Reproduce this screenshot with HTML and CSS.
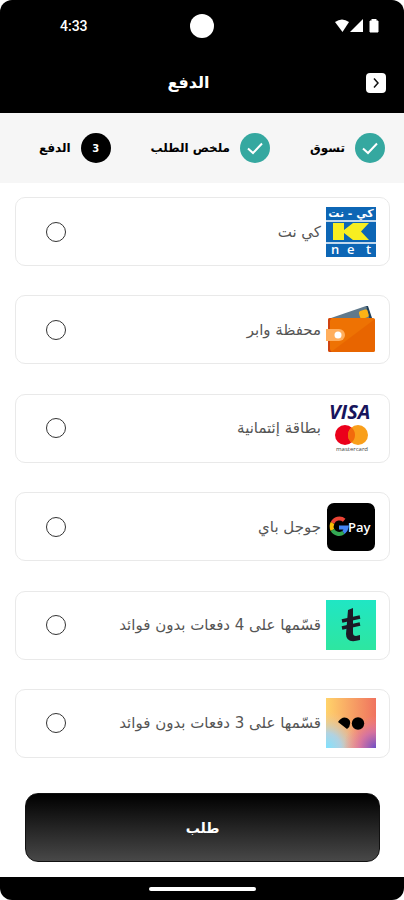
FILE: index.html
```html
<!DOCTYPE html>
<html lang="ar" dir="rtl">
<head>
    <meta charset="UTF-8">
    <meta name="viewport" content="width=device-width, initial-scale=1.0">
    <title>الدفع</title>
    <link rel="stylesheet" href="styles.css">
</head>
<body>
    <div class="screen">
        <div class="status-bar" dir="ltr">
            <span class="time">4:33</span>
            <span class="camera"></span>
            <svg class="status-icons" width="44" height="14" viewBox="0 0 44 14" fill="#fff">
                <path d="M0 3Q7 -2 14 3L7.500 13Z"/>
                <path d="M28 0V13H15Z"/>
                <path d="M35 2H37V0H41V2H43V13H35Z" stroke="#fff" stroke-linejoin="round"/>
            </svg>
        </div>

        <header class="header">
            <button type="button" class="back" aria-label="رجوع">
                <svg width="20" height="20" viewBox="0 0 20 20" fill="none" stroke="#111" stroke-width="1.500">
                    <path d="M8 5.500L12 10L8 14.500"/>
                </svg>
            </button>
            <h1>الدفع</h1>
        </header>

        <ol class="steps">
            <li class="step">
                <span class="badge done">
                    <svg width="30" height="30" viewBox="0 0 30 30" fill="none" stroke="#fff" stroke-width="2">
                        <path d="M8 15.500L13 20L22 10.500"/>
                    </svg>
                </span>
                <span>تسوق</span>
            </li>
            <li class="step">
                <span class="badge done">
                    <svg width="30" height="30" viewBox="0 0 30 30" fill="none" stroke="#fff" stroke-width="2">
                        <path d="M8 15.500L13 20L22 10.500"/>
                    </svg>
                </span>
                <span>ملخص الطلب</span>
            </li>
            <li class="step">
                <span class="badge">3</span>
                <span>الدفع</span>
            </li>
        </ol>

        <form class="payment">
            <div class="methods">
                <label class="method" for="knet">
                    <svg class="logo" viewBox="0 0 50 50">
                        <rect width="50" height="50" fill="#0d66b5"/>
                        <path d="M0 14H50M0 36H50" stroke="#fff" stroke-width="1.500"/>
                        <text class="knet-name" x="25" y="10" font-size="11" fill="#fff">كي - نت</text>
                        <path d="M7 16H18V23L27 16H43L35 24.500L43 33H27L18 26V33H7Z" fill="#f8ee20"/>
                        <g class="logo-text" fill="#fff" font-size="13" font-weight="600">
                            <text x="5" y="47">n</text>
                            <text x="21" y="47">e</text>
                            <text x="40" y="47">t</text>
                        </g>
                    </svg>
                    <span class="name">كي نت</span>
                    <input type="radio" name="method" id="knet">
                </label>

                <label class="method" for="wallet">
                    <svg class="logo" viewBox="0 0 50 50">
                        <path d="M5 13L40 1L46 16H8Z" fill="#60798b"/>
                        <path d="M40 1L42 1L47 16H44Z" fill="#203f58"/>
                        <rect x="33" y="5" width="9" height="8" rx="2" fill="#fbb316" transform="rotate(-17 38 8)"/>
                        <rect x="2" y="13" width="47" height="34" rx="2" fill="#ee7203"/>
                        <path d="M5 47L49 14V45Q49 47 47 47Z" fill="#e86500"/>
                        <path d="M4 13Q2 13 2 15V45Q2 47 4 47H6Q4 46 4 44V16Q4 14 6 13Z" fill="#cf4310"/>
                        <path d="M0 24H13A6 6 0 0 1 13 36H0Z" fill="#ffae5c"/>
                        <circle cx="12" cy="30" r="3.500" fill="#fff"/>
                    </svg>
                    <span class="name">محفظة وابر</span>
                    <input type="radio" name="method" id="wallet">
                </label>

                <label class="method" for="card">
                    <svg class="logo" viewBox="0 0 50 50">
                        <text class="logo-text" x="3" y="16" font-size="20" font-style="italic" font-weight="bold" fill="#17145c">VISA</text>
                        <circle cx="19" cy="32" r="10" fill="#eb001b"/>
                        <circle cx="32" cy="32" r="10" fill="#f99f1b"/>
                        <path d="M25.500 24.400A10 10 0 0 1 25.500 39.600A10 10 0 0 1 25.500 24.400Z" fill="#f26a0c"/>
                        <text class="logo-text" x="10" y="48" font-size="6" fill="#444">mastercard</text>
                    </svg>
                    <span class="name">بطاقة إئتمانية</span>
                    <input type="radio" name="method" id="card">
                </label>

                <label class="method" for="gpay">
                    <svg class="logo" viewBox="0 0 50 50">
                        <rect x="1" y="1" width="48" height="48" rx="7" fill="#000"/>
                        <g fill="none" stroke-width="4">
                            <path d="M18.200 18.200A7.500 7.500 0 0 0 6.500 21" stroke="#ea4335"/>
                            <path d="M6.500 21A7.500 7.500 0 0 0 6.500 28" stroke="#fbbc05"/>
                            <path d="M6.500 28A7.500 7.500 0 0 0 17.500 30.500" stroke="#34a853"/>
                            <path d="M17.500 30.500A7.500 7.500 0 0 0 20.500 25.500H13" stroke="#4285f4"/>
                        </g>
                        <text class="logo-text" x="22" y="30" font-size="13" font-weight="600" fill="#fff">Pay</text>
                    </svg>
                    <span class="name">جوجل باي</span>
                    <input type="radio" name="method" id="gpay">
                </label>

                <label class="method" for="split4">
                    <svg class="logo" viewBox="0 0 50 50">
                        <defs>
                            <linearGradient id="mint" x1="0" y1="0" x2="0" y2="1">
                                <stop offset="0" stop-color="#20e6c4"/>
                                <stop offset="1" stop-color="#2ee6a0"/>
                            </linearGradient>
                        </defs>
                        <rect width="50" height="50" fill="url(#mint)"/>
                        <path d="M22 10L27 8V33Q27 36 30 36L34 35V40Q20 44 20 34Z" fill="#1d1a26"/>
                        <path d="M16 21L34 17M16 28L34 24" stroke="#1d1a26" stroke-width="3.500"/>
                    </svg>
                    <span class="name">قسّمها على 4 دفعات بدون فوائد</span>
                    <input type="radio" name="method" id="split4">
                </label>

                <label class="method" for="split3">
                    <svg class="logo" viewBox="0 0 50 50">
                        <defs>
                            <linearGradient id="warm" x1="0" y1="0" x2="1" y2="0">
                                <stop offset="0" stop-color="#ffd36a"/>
                                <stop offset="1" stop-color="#f0735f"/>
                            </linearGradient>
                            <radialGradient id="sky" cx="0" cy="1" r="0.750">
                                <stop offset="0" stop-color="#7ee2ff"/>
                                <stop offset="0.400" stop-color="#a9d3ee" stop-opacity="0.900"/>
                                <stop offset="1" stop-color="#ffc28a" stop-opacity="0"/>
                            </radialGradient>
                            <radialGradient id="violet" cx="1" cy="1" r="0.650">
                                <stop offset="0" stop-color="#6a4fc8"/>
                                <stop offset="0.500" stop-color="#cf6fae" stop-opacity="0.800"/>
                                <stop offset="1" stop-color="#f2809a" stop-opacity="0"/>
                            </radialGradient>
                        </defs>
                        <rect width="50" height="50" fill="url(#warm)"/>
                        <rect width="50" height="50" fill="url(#sky)"/>
                        <rect width="50" height="50" fill="url(#violet)"/>
                        <circle cx="32" cy="25.500" r="6.200" fill="#000"/>
                        <path d="M12 24Q16 18 21 20Q25 22 24 26Q24 29 21 31Z" fill="#000"/>
                    </svg>
                    <span class="name">قسّمها على 3 دفعات بدون فوائد</span>
                    <input type="radio" name="method" id="split3">
                </label>
            </div>

            <button type="submit" class="submit">طلب</button>
        </form>

        <div class="nav-bar"><span class="handle"></span></div>
    </div>
</body>
</html>
```
FILE: styles.css
```css
* {
    box-sizing: border-box;
}
body {
    margin: 0;
    background-color: #fff;
    font-family: "DejaVu Sans", sans-serif;
}
.screen {
    display: flex;
    flex-direction: column;
    min-height: 100vh;
    border-radius: 12px;
    overflow: hidden;
    background-color: #fff;
}
.status-bar {
    display: grid;
    grid-template-columns: 1fr auto 1fr;
    align-items: center;
    height: 52px;
    padding: 0 25px;
    background-color: #000;
    color: #fff;
}
.time {
    padding-left: 35px;
    font: 500 14px Roboto, sans-serif;
}
.camera {
    width: 24px;
    height: 24px;
    border-radius: 50%;
    background-color: #fff;
}
.status-icons {
    justify-self: end;
}
.header {
    display: flex;
    align-items: center;
    height: 61px;
    padding: 0 18px 0 11px;
    background-color: #000;
    color: #fff;
}
.header h1 {
    flex: 1;
    margin: 0;
    font-size: 16px;
    text-align: center;
}
.back {
    display: flex;
    padding: 0;
    border: none;
    border-radius: 4px;
    background-color: #fff;
    cursor: pointer;
}
.steps {
    display: flex;
    justify-content: space-between;
    align-items: center;
    height: 70px;
    margin: 0;
    padding: 0 19px 0 39px;
    background-color: #f6f6f6;
    list-style: none;
}
.step {
    display: flex;
    align-items: center;
    gap: 10px;
    font-size: 12px;
    font-weight: bold;
    white-space: nowrap;
}
.badge {
    display: flex;
    justify-content: center;
    align-items: center;
    width: 30px;
    height: 30px;
    border-radius: 50%;
    background-color: #000;
    color: #fff;
    font-size: 10px;
}
.badge.done {
    background-color: #35a8a0;
}
.payment {
    flex: 1;
    display: flex;
    flex-direction: column;
    padding: 14px 14px 15px 15px;
}
.methods {
    flex: 1;
    display: flex;
    flex-direction: column;
    justify-content: space-between;
    margin-bottom: 35px;
}
.method {
    display: flex;
    align-items: center;
    height: 69px;
    padding: 0 13px 0 30px;
    border: 1px solid #e9e9e9;
    border-radius: 10px;
    color: #555;
    font-size: 15px;
    cursor: pointer;
}
.logo {
    flex: none;
    width: 50px;
    height: 50px;
    overflow: visible;
}
.logo-text {
    font-family: "Open Sans", sans-serif;
    direction: ltr;
}
.knet-name {
    font-weight: bold;
    text-anchor: middle;
}
.name {
    flex: 1;
    padding-right: 5px;
}
.method input {
    appearance: none;
    width: 20px;
    height: 20px;
    margin: 0;
    border: 1px solid #333;
    border-radius: 50%;
}
.method input:checked {
    border-width: 6px;
}
.submit {
    height: 69px;
    margin: 0 10px;
    border: 1px solid #111;
    border-radius: 13px;
    background: linear-gradient(#000, #484848);
    color: #fff;
    font-family: inherit;
    font-size: 14px;
    font-weight: bold;
    cursor: pointer;
}
.nav-bar {
    display: flex;
    justify-content: center;
    align-items: center;
    height: 23px;
    background-color: #000;
}
.handle {
    width: 107px;
    height: 4px;
    border-radius: 2px;
    background-color: #fff;
}
```
